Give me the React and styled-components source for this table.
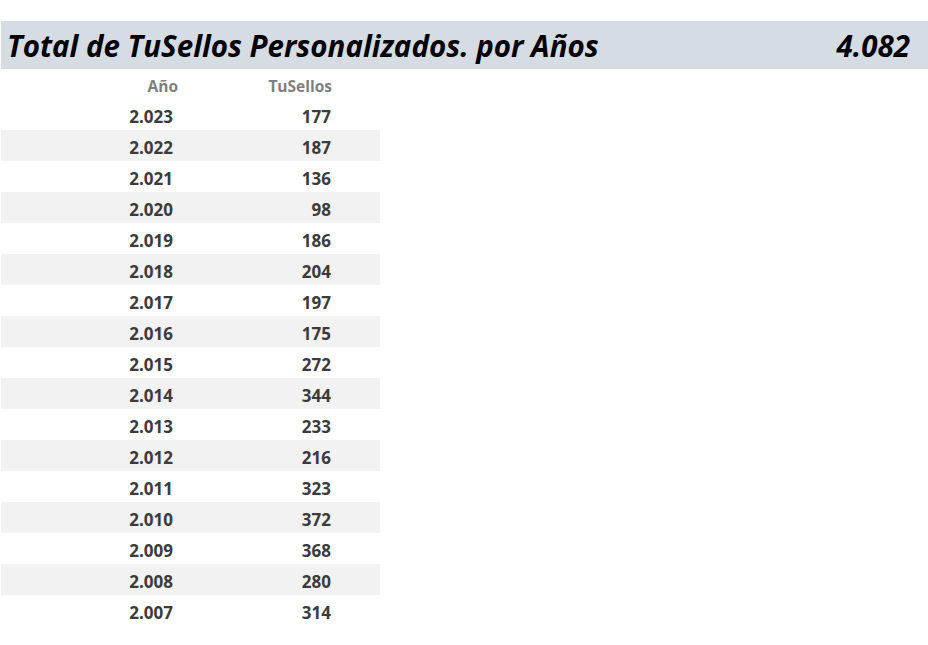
import React from 'react'
import styled, { createGlobalStyle } from 'styled-components'

const GlobalStyle = createGlobalStyle`
  body {
    margin: 0;
    background: #ffffff;
    font-family: "Open Sans", "Liberation Sans", sans-serif;
  }
`

const Page = styled.div`
  padding: 21px 0 0 1px;
`

const TitleBar = styled.header`
  height: 48px;
  background: #d6dce4;
  display: flex;
  align-items: center;
  justify-content: space-between;
  padding: 0 18px 0 6px;
  font-style: italic;
  font-weight: 700;
  font-size: 29.5px;
  color: #000000;
`

const Table = styled.div`
  width: 379px;
  display: grid;
  grid-template-columns: 178px 154px 1fr;
`

const HeadCell = styled.div`
  height: 30px;
  box-sizing: border-box;
  padding-top: 4px;
  display: flex;
  align-items: center;
  justify-content: flex-end;
  padding-right: ${props => props.pr || 0}px;
  font-size: 15.5px;
  font-weight: 700;
  color: #7f7f7f;
`

const Row = styled.div`
  display: contents;

  & > * {
    background: ${props => (props.striped ? '#f2f2f2' : '#ffffff')};
  }
`

const Cell = styled.div`
  height: 31px;
  box-sizing: border-box;
  padding-top: 4px;
  display: flex;
  align-items: center;
  justify-content: flex-end;
  padding-right: ${props => props.pr || 0}px;
  font-size: 17px;
  font-weight: 700;
  color: #3b3b3b;
`

const data = [
  ['2.023', 177],
  ['2.022', 187],
  ['2.021', 136],
  ['2.020', 98],
  ['2.019', 186],
  ['2.018', 204],
  ['2.017', 197],
  ['2.016', 175],
  ['2.015', 272],
  ['2.014', 344],
  ['2.013', 233],
  ['2.012', 216],
  ['2.011', 323],
  ['2.010', 372],
  ['2.009', 368],
  ['2.008', 280],
  ['2.007', 314],
]

export default function App() {
  return (
    <Page>
      <GlobalStyle />
      <TitleBar>
        <span>Total de TuSellos Personalizados. por Años</span>
        <span>4.082</span>
      </TitleBar>
      <Table>
        <HeadCell pr={1}>Año</HeadCell>
        <HeadCell pr={1}>TuSellos</HeadCell>
        <HeadCell />
        {data.map(([year, count], i) => (
          <Row key={year} striped={i % 2 === 1}>
            <Cell pr={6}>{year}</Cell>
            <Cell pr={2}>{count}</Cell>
            <Cell />
          </Row>
        ))}
      </Table>
    </Page>
  )
}
